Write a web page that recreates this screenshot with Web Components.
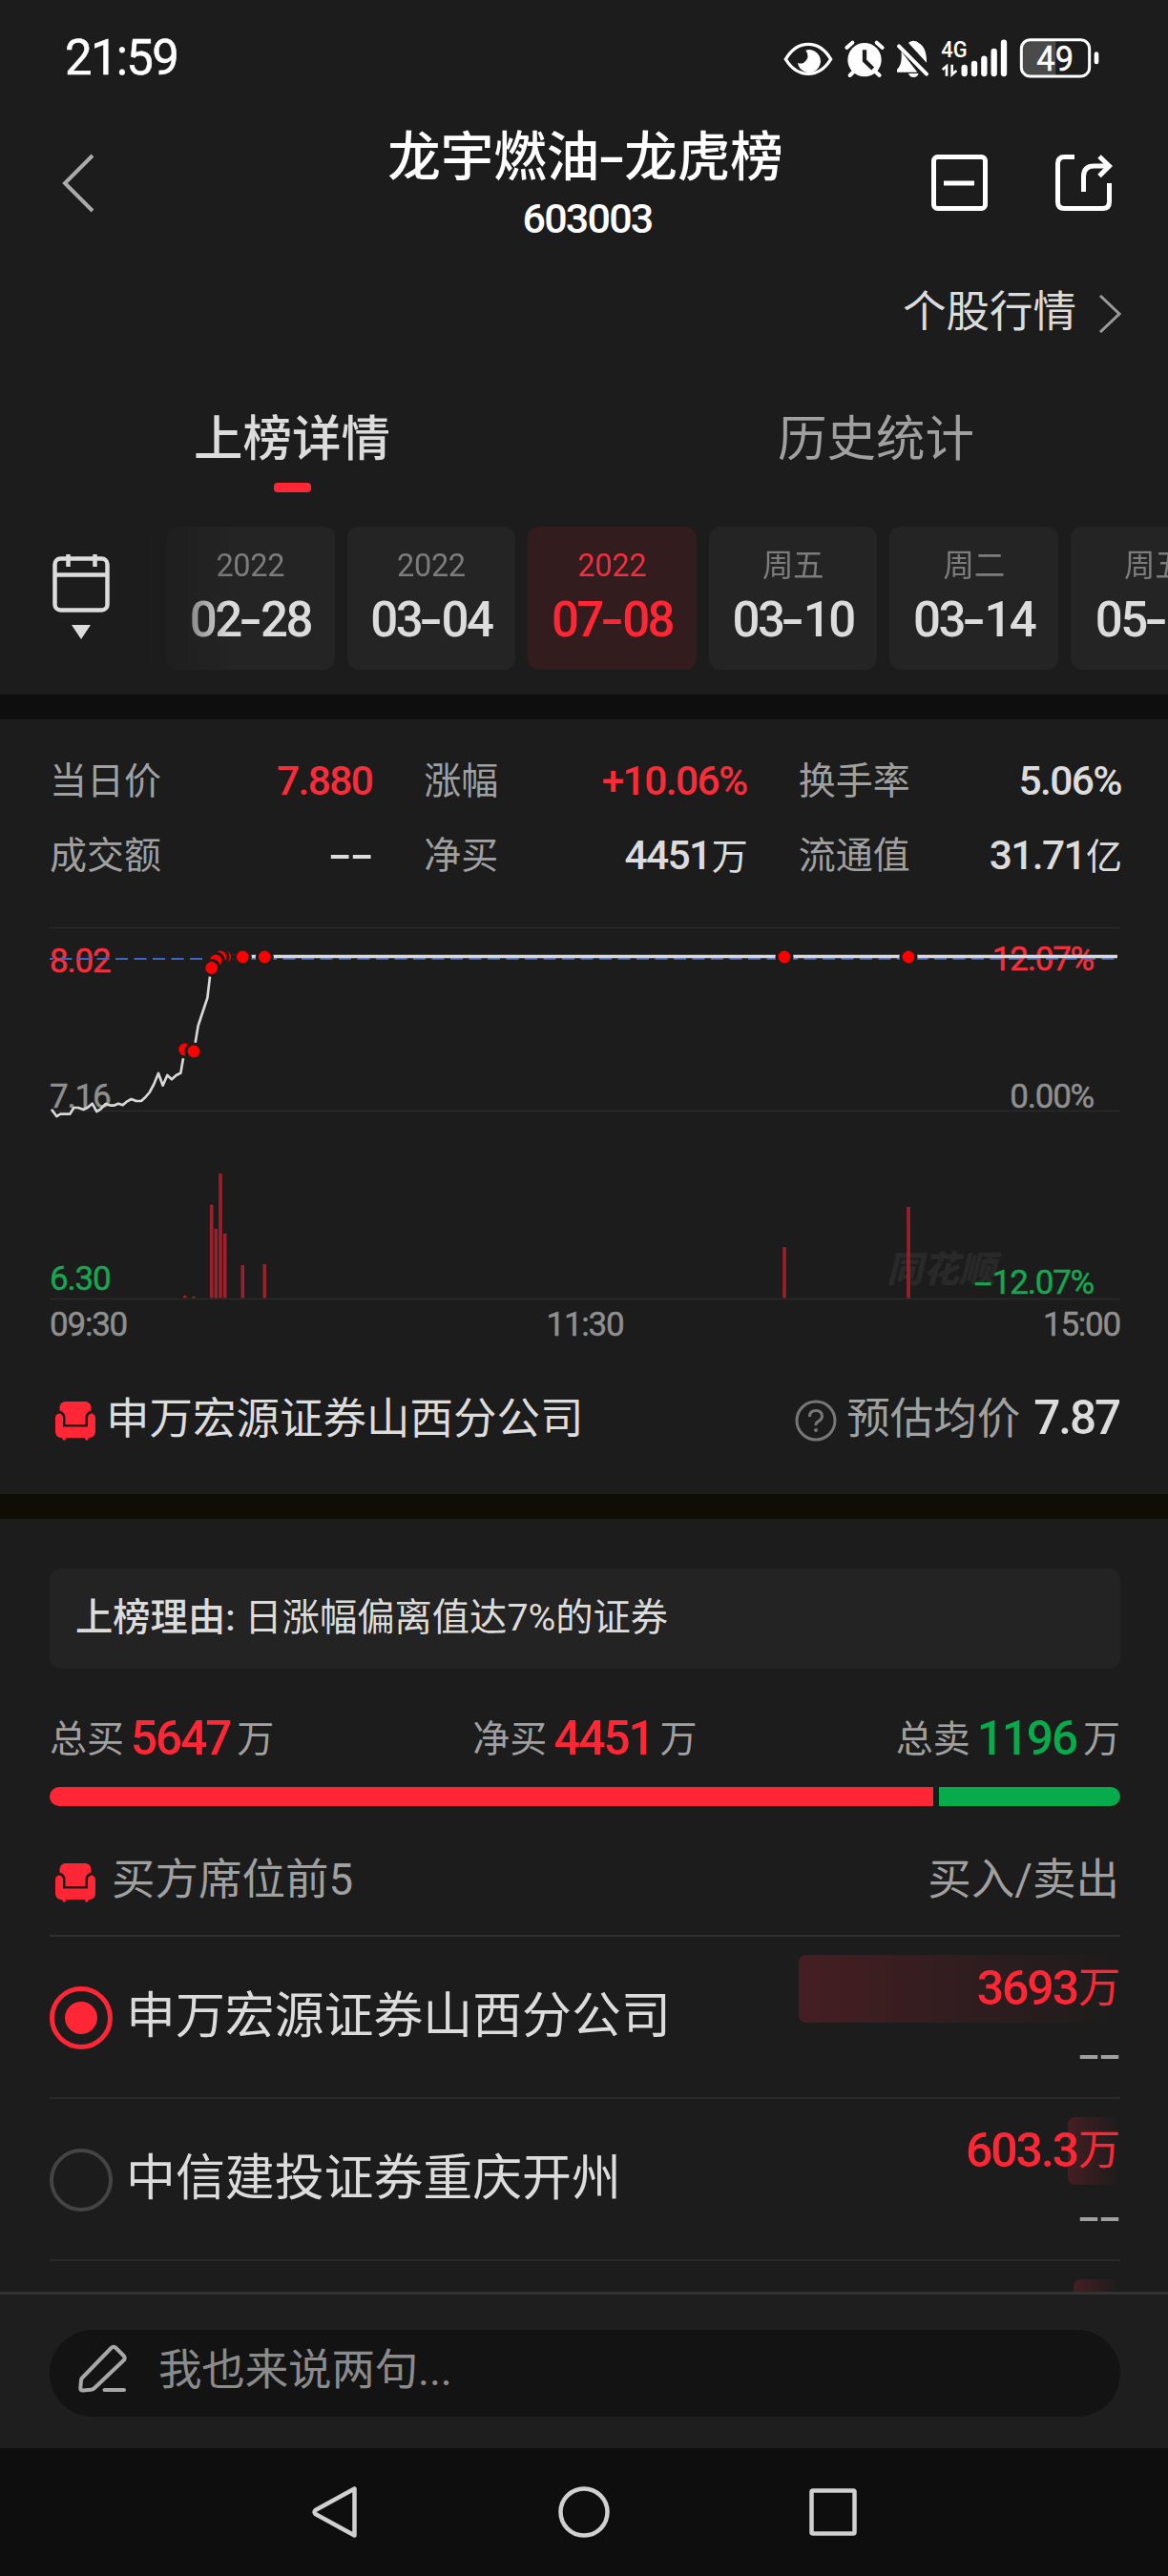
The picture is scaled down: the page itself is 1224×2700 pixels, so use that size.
<!DOCTYPE html>
<html lang="zh-CN">
<head>
<meta charset="utf-8">
<title>龙宇燃油-龙虎榜</title>
<style>
  :root {
    --bg: #1c1c1c;
    --card: #242424;
    --text: #dcdcdc;
    --muted: #a0a0a0;
    --faint: #7c7c7c;
    --red: #ff2736;
    --green: #08ab4b;
    --line: #2a2a2a;
  }
  body {
    margin: 0;
    width: 1224px;
    height: 2700px;
    overflow: hidden;
    background: var(--bg);
    color: var(--text);
    font-family: Roboto, "Noto Sans CJK SC", sans-serif;
    font-size: 39px;
    line-height: 1;
  }
</style>
</head>
<body>
<stock-page></stock-page>

<script>
{
  const html = String.raw;

  // Small helper: every element here is a static shadow tree
  function define(name, render) {
    customElements.define(
      name,
      class extends HTMLElement {
        constructor() {
          super();
          this.attachShadow({ mode: "open" });
        }

        connectedCallback() {
          this.shadowRoot.innerHTML = render(this);
        }
      }
    );
  }

  const attr = (el, name) => el.getAttribute(name) ?? "";

  const icons = {
    back: [34, 62, html`<path d="M32 2 3 31 32 60" fill="none" stroke="#ababab" stroke-width="4"/>`],
    next: [26, 40, html`<path d="M2 1 22 20 2 39" fill="none" stroke="#9a9a9a" stroke-width="3"/>`],
    minus: [60, 60, html`<g fill="none" stroke="#fff" stroke-width="5"><rect x="2.5" y="2.5" width="54" height="54" rx="4"/><path d="M13 30H45"/></g>`],
    share: [60, 60, html`<g fill="none" stroke="#fff" stroke-width="5"><path d="M20 2.5H9.500Q2.500 2.500 2.500 9.500V49.500Q2.500 56.500 9.500 56.500H49.500Q56.500 56.500 56.500 49.500V30"/><path d="M29.500 39V23Q29.500 12 40.500 12H57"/><path d="M46 2 56.500 12 46 22.500"/></g>`],
    calendar: [60, 62, html`<g fill="none" stroke="#dcdcdc" stroke-width="4.500"><rect x="2.500" y="5.500" width="55" height="54" rx="6"/><path d="M2 22.500H58M16.500 1V14M44.500 1V14"/></g>`],
    sofa: [42, 42, html`<g fill="#ff2736"><path d="M10 1H32Q37 2 37.500 7V10.500Q32 12 31.500 17V25H10.500V17Q10 12 4.500 10.500V7Q5 2 10 1Z"/><path d="M4 13.500Q7.700 14 8 18V27.500H34V18Q34.300 14 38 13.500Q41.700 14 42 18V33Q41.500 38.500 36 39H35L34 41.500H31.500L31 39H11L10.500 41.500H8L7 39H6Q.5 38.500 0 33V18Q.3 14 4 13.500Z"/></g>`],
    help: [44, 44, html`<circle cx="22" cy="22" r="20" fill="none" stroke="#777" stroke-width="3"/><path d="M15.500 18Q15.500 11.500 22 11.500T28.500 17.500Q28.500 20.500 25 22.500T22 27" fill="none" stroke="#777" stroke-width="3"/><circle cx="22" cy="32" r="2" fill="#777"/>`],
    pen: [52, 52, html`<g fill="none" stroke="#a8a8a8" stroke-width="4" stroke-linejoin="round" stroke-linecap="round"><path d="M4 35.500 34.500 4Q37 1.500 39.500 4L47.500 12Q50 14.500 47.500 17L17 46Q15.500 47.500 13.500 47.700L5 48.500Q2.300 48.500 2.300 46L3 38Q3 36.500 4 35.500Z"/><path d="M27.500 48H48"/></g>`],
    navBack: [50, 56, html`<path d="M45.500 3.500V52.500L4.500 30Q2.500 28 4.500 26Z" fill="none" stroke="#d0d0d0" stroke-width="4.500" stroke-linejoin="round"/>`],
    navHome: [56, 56, html`<circle cx="28" cy="28" r="24.500" fill="none" stroke="#d0d0d0" stroke-width="4.500"/>`],
    navRecent: [50, 50, html`<rect x="2.500" y="2.500" width="45" height="45" rx="1.500" fill="none" stroke="#d0d0d0" stroke-width="4.500"/>`],
  };

  define("x-icon", (el) => {
    const [w, h, shape] = icons[attr(el, "name")];
    return html`
      <style>
        :host { display: inline-flex; flex: none; }
      </style>
      <svg width="${w}" height="${h}" viewBox="0 0 ${w} ${h}">${shape}</svg>
    `;
  });

  // Tight figures with wide hyphens
  define("num-text", (el) => {
    const value = attr(el, "value").replaceAll("-", "<i>-</i>");
    return html`
      <style>
        :host {
          display: inline-block;
          white-space: nowrap;
          letter-spacing: -0.042em;
        }
        i {
          display: inline-block;
          width: var(--dash-width, 0.53em);
          font-style: normal;
          letter-spacing: 0;
          text-align: center;
          transform: scaleX(var(--dash-scale, 1.7));
        }
      </style>
      ${value}
    `.trim();
  });

  define("status-bar", () => html`
    <style>
      :host {
        display: flex;
        justify-content: space-between;
        align-items: center;
        height: 120px;
        padding: 1px 71px 0 68px;
        box-sizing: border-box;
        color: #fff;
      }
      num-text { font-size: 51px; font-weight: 400; -webkit-text-stroke: 0.5px; letter-spacing: -0.035em; }
    </style>
    <num-text value="21:59"></num-text>
    <svg width="332" height="44" viewBox="120 50 996 132" fill="#fff">
      <path d="M127 119Q155 72 198 72T269 119Q241 165 198 165T127 119Z" fill="none" stroke="#fff" stroke-width="10"/>
      <path d="M190 91A36 36 0 1 1 165 130Q174 135 184 130Q206 112 190 91Z"/>
      <circle cx="375" cy="121" r="53"/>
      <path d="M319 83 337 67M431 83 413 67M341 158 329 170M409 158 422 170" stroke="#fff" stroke-width="12" stroke-linecap="round"/>
      <path d="M375 90V124L401 149" fill="none" stroke="#1c1c1c" stroke-width="13"/>
      <path d="M491 95V116Q490 140 477 151V160H541Z"/>
      <path d="M513 68Q517 62 529 61Q541 62 545 68Q571 82 570 130Z"/>
      <path d="M483 78 570 166" stroke="#fff" stroke-width="12" stroke-linecap="round"/>
      <path d="M513 164H545Q541 176 529 176T513 164Z"/>
      <text x="616" y="113" font-size="72" font-weight="500" textLength="82" lengthAdjust="spacingAndGlyphs">4G</text>
      <path d="M633 172V141L620 152M650 136V167L664 155" fill="none" stroke="#fff" stroke-width="8"/>
      <path d="M689 146V164M720 134V164M751 118V164M782 95V164M813 67V164" stroke="#fff" stroke-width="19" stroke-linecap="round"/>
      <path d="M892 62H976V172H892Q872 172 872 150V84Q872 62 892 62Z" fill="#4a4a4a"/>
      <rect x="868" y="58" width="214" height="115" rx="28" fill="none" stroke="#fff" stroke-width="9"/>
      <rect x="1097" y="96" width="14" height="39" rx="7"/>
      <text x="916" y="155" font-size="108" textLength="116" lengthAdjust="spacingAndGlyphs" stroke="#fff" stroke-width="1.500">49</text>
    </svg>
  `);

  define("page-header", () => html`
    <style>
      :host {
        display: grid;
        grid-template-columns: 190px 1fr 190px;
        align-items: center;
        height: 144px;
        padding: 0 58px 0 65px;
        color: #fff;
        font-weight: 500;
        text-align: center;
      }
      .title { font-size: 55.500px; line-height: 66px; padding-top: 8px; white-space: nowrap; }
      .title num-text { margin-left: -4px; letter-spacing: 0; --dash-width: 0.47em; --dash-scale: 1.55; }
      .code { font-size: 43px; line-height: 60px; }
      .actions { display: flex; justify-content: flex-end; gap: 70px; }
      x-icon { justify-self: start; }
    </style>
    <x-icon name="back"></x-icon>
    <div>
      <div class="title"><num-text value="龙宇燃油-龙虎榜"></num-text></div>
      <div class="code"><num-text value="603003"></num-text></div>
    </div>
    <div class="actions">
      <x-icon name="minus"></x-icon>
      <x-icon name="share"></x-icon>
    </div>
  `);

  define("quote-link", () => html`
    <style>
      :host {
        display: flex;
        justify-content: flex-end;
        align-items: center;
        gap: 23px;
        height: 124px;
        padding-right: 47px;
        font-size: 45.500px;
      }
      span { margin-top: 4px; }
      x-icon { margin-top: 6px; }
    </style>
    <span><slot></slot></span>
    <x-icon name="next"></x-icon>
  `);

  define("tab-item", () => html`
    <style>
      :host {
        flex: 1;
        display: flex;
        flex-direction: column;
        align-items: center;
        height: 140px;
        color: var(--muted);
        font-size: 51.500px;
        font-weight: 400;
      }
      span { line-height: 126px; padding-top: 10px; height: 108px; }
      i { width: 39px; height: 10px; border-radius: 4px; }
      :host([active]) { color: var(--text); font-weight: 500; }
      :host([active]) i { background: var(--red); }
    </style>
    <span><slot></slot></span>
    <i></i>
  `);

  define("date-card", (el) => html`
    <style>
      :host {
        flex: none;
        box-sizing: border-box;
        display: flex;
        flex-direction: column;
        align-items: center;
        width: 176.600px;
        height: 150px;
        padding-top: 23px;
        border-radius: 12px;
        background: var(--card);
      }
      small { color: var(--faint); font-size: 32.500px; line-height: 36px; }
      .date {
        min-width: 125px;
        margin-top: 11px;
        font-size: 51px;
        font-weight: 500;
        line-height: 56px;
        letter-spacing: -0.05em;
        --dash-width: 0.42em;
        --dash-scale: 1.4;
      }
      .year { letter-spacing: -0.01em; line-height: 36px; }
      :host([active]) { background: #331c1e; color: var(--red); }
      :host([active]) small { color: #f03040; }
    </style>
    <small><num-text class="year" value="${attr(el, "top")}"></num-text></small>
    <num-text class="date" value="${attr(el, "date")}"></num-text>
  `);

  define("date-strip", () => html`
    <style>
      :host {
        display: flex;
        height: 200px;
        box-sizing: border-box;
        padding: 24px 0 26px;
      }
      .pick {
        display: flex;
        flex-direction: column;
        align-items: center;
        gap: 13px;
        width: 60px;
        padding: 28px 30px 0 55px;
      }
      .pick i {
        border: solid transparent;
        border-width: 15px 10px 0;
        border-top-color: var(--text);
      }
      /* Cards fade out under the calendar button */
      .cards {
        flex: 1;
        min-width: 0;
        display: flex;
        gap: 13px;
        overflow: hidden;
        mask-image: linear-gradient(90deg, transparent, #000 95px);
      }
      .cards > span {
        flex: none;
        width: 16px;
        border-radius: 0 12px 12px 0;
        background: var(--card);
      }
    </style>
    <div class="pick"><x-icon name="calendar"></x-icon><i></i></div>
    <div class="cards"><span></span><slot></slot></div>
  `);

  define("section-gap", () => html`
    <style>
      :host { display: block; height: 26px; background: var(--gap, #0e0e0e); }
    </style>
  `);

  define("stat-item", (el) => html`
    <style>
      :host {
        display: flex;
        justify-content: space-between;
        align-items: center;
        height: 78px;
        color: var(--muted);
        font-size: 39px;
      }
      num-text { color: var(--text); font-size: 42.500px; font-weight: 500; letter-spacing: -0.038em; }
      :host([up]) num-text { color: #f92c3a; }
      .unit { font-size: 38px; color: var(--text); margin-left: 1px; }
    </style>
    <span><slot></slot></span>
    <span><num-text value="${attr(el, "value")}"></num-text><span class="unit">${attr(el, "unit")}</span></span>
  `);

  define("stat-grid", () => html`
    <style>
      :host {
        display: grid;
        grid-template-columns: repeat(3, 1fr);
        column-gap: 53px;
        padding: 26px 48px 35px 52px;
      }
    </style>
    <slot></slot>
  `);

  // Trades: x, y of each marker, painted in this order
  const markers = [
    [193.7, 1099], [203, 1101], [277.3, 1002], [254.3, 1002], [235.7, 1002],
    [231, 1002], [226.3, 1006], [221.7, 1013.5], [822, 1002], [952, 1002],
  ];

  // Volume bars: x centre, top
  const volumes = [
    [193.7, 1357], [203, 1358], [221.7, 1261.7], [226.3, 1287], [231, 1229], [235.7, 1292],
    [254.3, 1325], [277.3, 1324], [822, 1306], [952, 1264],
  ];

  define("minute-chart", () => html`
    <style>
      :host {
        display: block;
        position: relative;
        height: 435px;
        margin: 0 50px 0 52px;
        font-size: 35px;
        color: #8f8f8f;
      }
      svg { position: absolute; inset: 0; }
      num-text {
        position: absolute;
        left: 0;
        line-height: 35px;
        letter-spacing: -0.035em;
        -webkit-text-stroke: 0.5px;
        --dash-scale: 1.9;
      }
      num-text.right { left: auto; right: 28px; }
      .up { color: #f5303e; }
      .down { color: #16a750; }
      .times { position: absolute; inset: 400px 0 auto; display: flex; justify-content: space-between; }
      .times num-text { position: static; }
      .mark {
        position: absolute;
        left: 877px;
        top: 338px;
        font: italic 900 38px/38px "Noto Sans CJK SC", sans-serif;
        color: #292929;
      }
    </style>
    <span class="mark">同花顺</span>
    <num-text class="up" style="top:19px" value="8.02"></num-text>
    <num-text style="top:161px" value="7.16"></num-text>
    <num-text class="down" style="top:352px" value="6.30"></num-text>
    <num-text class="right up" style="top:17px" value="12.07%"></num-text>
    <num-text class="right" style="top:161px" value="0.00%"></num-text>
    <num-text class="right down" style="top:356px" value="-12.07%"></num-text>
    <svg width="1122" height="435" viewBox="52 970 1122 435">
      <path d="M52 971.500H1174M52 1163.500H1174M52 1360.500H1174" stroke="#2a2a2a" stroke-width="1.500"/>
      <path d="M52 1004H1174" stroke="#3f64c8" stroke-width="2.200" stroke-dasharray="13 6.500" stroke-dashoffset="9"/>
      <path transform="translate(0 960) scale(.33333)" fill="none" stroke="#d8d8d8" stroke-width="8" stroke-linejoin="round"
        d="M162 605 178 627 190 620H220L232 600H246L262 606 275 600 290 587 304 612 316 605 332 588 348 593H358L372 587 386 592 400 580 413 573 428 579H444L458 566 470 552 483 528 498 492 512 530 526 498 540 511 555 497 568 491 576 445 581 417 609 423 614 396 623 342 637 300 652 255 660 188 665 160 679 138 693 126"/>
      <path d="M231 1001.500H1171" stroke="#d8d8d8" stroke-width="3.400"/>
      ${volumes.map(([x, y]) => `<rect x="${x - 1.8}" y="${y}" width="3.600" height="${1359.5 - y}" fill="#9a212c"/>`).join("")}
      ${markers.map(([x, y]) => `<circle cx="${x}" cy="${y}" r="8" fill="red" stroke="#1c1c1c" stroke-width="3.200"/>`).join("")}
    </svg>
    <div class="times">
      <num-text value="09:30"></num-text>
      <num-text value="11:30"></num-text>
      <num-text value="15:00"></num-text>
    </div>
  `);

  define("broker-line", (el) => html`
    <style>
      :host {
        display: flex;
        align-items: center;
        height: 160px;
        padding: 0 51px 0 58px;
        font-size: 45.500px;
      }
      .name { flex: 1; margin: 3px 0 0 11px; }
      .label { color: var(--muted); margin: 3px 14px 0 10px; }
      num-text { font-size: 49.500px; font-weight: 500; margin-top: 2px; }
      x-icon { margin-top: 6px; }
    </style>
    <x-icon name="sofa"></x-icon>
    <span class="name"><slot></slot></span>
    <x-icon name="help"></x-icon>
    <span class="label">预估均价</span>
    <num-text value="${attr(el, "price")}"></num-text>
  `);

  define("reason-box", () => html`
    <style>
      :host {
        display: block;
        margin: 52px 50px 0 52px;
        height: 105px;
        border-radius: 12px;
        padding-left: 27px;
        background: #232323;
        font-size: 39.300px;
        line-height: 104px;
      }
      b { font-weight: 500; }
    </style>
    <b>上榜理由:</b> <slot></slot>
  `);

  define("total-item", (el) => html`
    <style>
      :host {
        display: flex;
        align-items: center;
        color: var(--muted);
        font-size: 39px;
      }
      num-text { margin: 0 7px; font-size: 49.500px; font-weight: 500; color: var(--red); }
      :host([sell]) num-text { color: var(--green); }
    </style>
    <slot></slot><num-text value="${attr(el, "value")}"></num-text>万
  `);

  define("total-bar", () => html`
    <style>
      :host { display: block; padding: 0 50px 0 52px; }
      .items { display: flex; justify-content: space-between; height: 124px; padding-top: 24px; box-sizing: border-box; }
      .bar { display: flex; gap: 6px; height: 20px; border-radius: 10px; overflow: hidden; }
      .buy { flex: 1; background: var(--red); }
      .sell { width: 190px; background: var(--green); }
    </style>
    <div class="items"><slot></slot></div>
    <div class="bar"><div class="buy"></div><div class="sell"></div></div>
  `);

  define("seat-header", () => html`
    <style>
      :host {
        display: flex;
        align-items: center;
        height: 137px;
        box-sizing: border-box;
        margin: 0 50px 0 52px;
        padding: 21px 1px 0 6px;
        border-bottom: 2px solid #2f2f2f;
        color: var(--muted);
        font-size: 45.500px;
      }
      .name { flex: 1; margin-left: 17px; }
      x-icon { margin-top: 4px; }
    </style>
    <x-icon name="sofa"></x-icon>
    <span class="name"><slot></slot></span>
    <span>买入/卖出</span>
  `);

  define("seat-row", (el) => {
    const buy = attr(el, "buy");
    return html`
      <style>
        :host {
          display: flex;
          height: 168px;
          margin: 0 50px 0 52px;
          border-bottom: 2px solid var(--line);
          color: var(--text);
          font-size: 51.900px;
        }
        .radio {
          display: grid;
          place-items: center;
          box-sizing: border-box;
          width: 66px;
          height: 66px;
          margin: 52px 14px 0 0;
          border: 4px solid #444;
          border-radius: 50%;
        }
        :host([checked]) .radio { border: 5px solid var(--red); }
        :host([checked]) .radio::before {
          content: "";
          width: 34px;
          height: 34px;
          border-radius: 50%;
          background: var(--red);
        }
        .name { flex: 1; line-height: 167px; white-space: nowrap; }
        .side { display: flex; flex-direction: column; align-items: flex-end; width: 337px; padding-top: 19px; }
        .amount {
          display: flex;
          justify-content: flex-end;
          align-items: center;
          height: 71px;
          border-radius: 8px;
          background: linear-gradient(90deg, #451e22, transparent);
          color: var(--red);
          font-size: 44px;
          line-height: 73px;
          white-space: nowrap;
        }
        .amount num-text { font-size: 50px; font-weight: 500; margin-right: 1px; }
        .sell { font-size: 42px; line-height: 69px; color: var(--muted); font-weight: 500; }
      </style>
      <div class="radio"></div>
      <div class="name"><slot></slot></div>
      <div class="side">
        <div class="amount" style="width:${attr(el, "share")}px">
          ${buy && `<num-text value="${buy}"></num-text>万`}
        </div>
        ${buy && `<num-text class="sell" value="--"></num-text>`}
      </div>
    `;
  });

  define("comment-bar", () => html`
    <style>
      :host {
        display: block;
        box-sizing: border-box;
        height: 164px;
        padding: 37px 50px 0 52px;
        border-top: 3px solid #333;
        background: #1e1e1e;
      }
      div {
        display: flex;
        align-items: center;
        gap: 32px;
        height: 91px;
        padding-left: 30px;
        border-radius: 46px;
        background: #131313;
        color: #8b8b8b;
        font-size: 45.500px;
      }
      span { margin-top: -5px; letter-spacing: -0.15px; }
      x-icon { margin-top: -10px; }
    </style>
    <div><x-icon name="pen"></x-icon><span><slot></slot></span></div>
  `);

  define("system-nav", () => html`
    <style>
      :host {
        display: flex;
        justify-content: center;
        align-items: center;
        gap: 208px;
        height: 134px;
        background: #0e0e0e;
      }
    </style>
    <x-icon name="navBack"></x-icon>
    <x-icon name="navHome"></x-icon>
    <x-icon name="navRecent"></x-icon>
  `);

  define("stock-page", () => html`
    <style>
      :host { display: flex; flex-direction: column; height: 2700px; }
      main { flex: 1; min-height: 0; overflow: hidden; }
      nav { display: flex; }
    </style>
    <main>
      <status-bar></status-bar>
      <page-header></page-header>
      <quote-link>个股行情</quote-link>
      <nav>
        <tab-item active>上榜详情</tab-item>
        <tab-item>历史统计</tab-item>
      </nav>
      <date-strip>
        <date-card top="2022" date="02-28"></date-card>
        <date-card top="2022" date="03-04"></date-card>
        <date-card top="2022" date="07-08" active></date-card>
        <date-card top="周五" date="03-10"></date-card>
        <date-card top="周二" date="03-14"></date-card>
        <date-card top="周五" date="05-"></date-card>
      </date-strip>
      <section-gap></section-gap>
      <stat-grid>
        <stat-item value="7.880" up>当日价</stat-item>
        <stat-item value="+10.06%" up>涨幅</stat-item>
        <stat-item value="5.06%">换手率</stat-item>
        <stat-item value="--">成交额</stat-item>
        <stat-item value="4451" unit="万">净买</stat-item>
        <stat-item value="31.71" unit="亿">流通值</stat-item>
      </stat-grid>
      <minute-chart></minute-chart>
      <broker-line price="7.87">申万宏源证券山西分公司</broker-line>
      <section-gap style="--gap:#0e0e07"></section-gap>
      <reason-box>日涨幅偏离值达7%的证券</reason-box>
      <total-bar>
        <total-item value="5647">总买</total-item>
        <total-item value="4451">净买</total-item>
        <total-item value="1196" sell>总卖</total-item>
      </total-bar>
      <seat-header>买方席位前5</seat-header>
      <seat-row buy="3693" share="337" checked>申万宏源证券山西分公司</seat-row>
      <seat-row buy="603.3" share="55">中信建投证券重庆开州</seat-row>
      <seat-row buy="" share="49"></seat-row>
    </main>
    <comment-bar>我也来说两句...</comment-bar>
    <system-nav></system-nav>
  `);
}
</script>
</body>
</html>
